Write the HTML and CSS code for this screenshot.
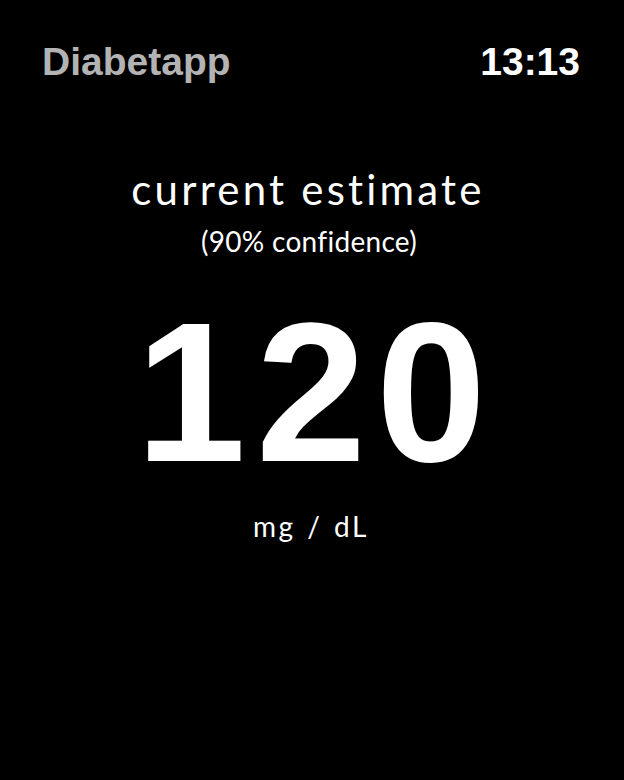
FILE: index.html
```html
<!DOCTYPE html>
<html>
<head>
<meta charset="utf-8">
<link rel="stylesheet" href="styles.css">
</head>
<body>
<div class="screen">
  <header class="topbar">
    <span class="app-name">Diabetapp</span>
    <span class="clock">13:13</span>
  </header>
  <main class="content">
    <div class="title">current estimate</div>
    <div class="subtitle">(90% confidence)</div>
    <div class="value">120</div>
    <div class="unit">mg / dL</div>
  </main>
</div>
</body>
</html>
```
FILE: styles.css
```css
html, body {
  margin: 0;
  padding: 0;
  background: #000;
}
.screen {
  width: 624px;
  height: 780px;
  background: #000;
  color: #fff;
  font-family: "Liberation Sans", Arial, sans-serif;
}
.topbar {
  display: flex;
  justify-content: space-between;
  align-items: baseline;
  padding: 42px 44px 0 42px;
  line-height: 39px;
}
.app-name {
  font-size: 39px;
  font-weight: 700;
  color: #b3b3b3;
}
.clock {
  font-size: 39px;
  font-weight: 700;
  color: #fff;
}
.content {
  display: flex;
  flex-direction: column;
  align-items: center;
  padding-top: 83px;
}
.title {
  font-family: Lato, "Noto Sans", sans-serif;
  font-size: 42px;
  line-height: 50px;
  letter-spacing: 3.2px;
  padding-right: 8px;
}
.subtitle {
  font-family: Lato, "Noto Sans", sans-serif;
  font-size: 28px;
  line-height: 34px;
  letter-spacing: 0.3px;
  margin-top: 10px;
  padding-right: 6px;
}
.value {
  font-size: 198px;
  font-weight: 700;
  line-height: 200px;
  letter-spacing: 10px;
  padding-left: 8px;
  margin-top: 35px;
}
.unit {
  font-family: Lato, "Noto Sans", sans-serif;
  font-size: 28px;
  line-height: 32px;
  letter-spacing: 2.5px;
  word-spacing: 2px;
  margin-top: 17px;
  padding-right: 2px;
}
```
